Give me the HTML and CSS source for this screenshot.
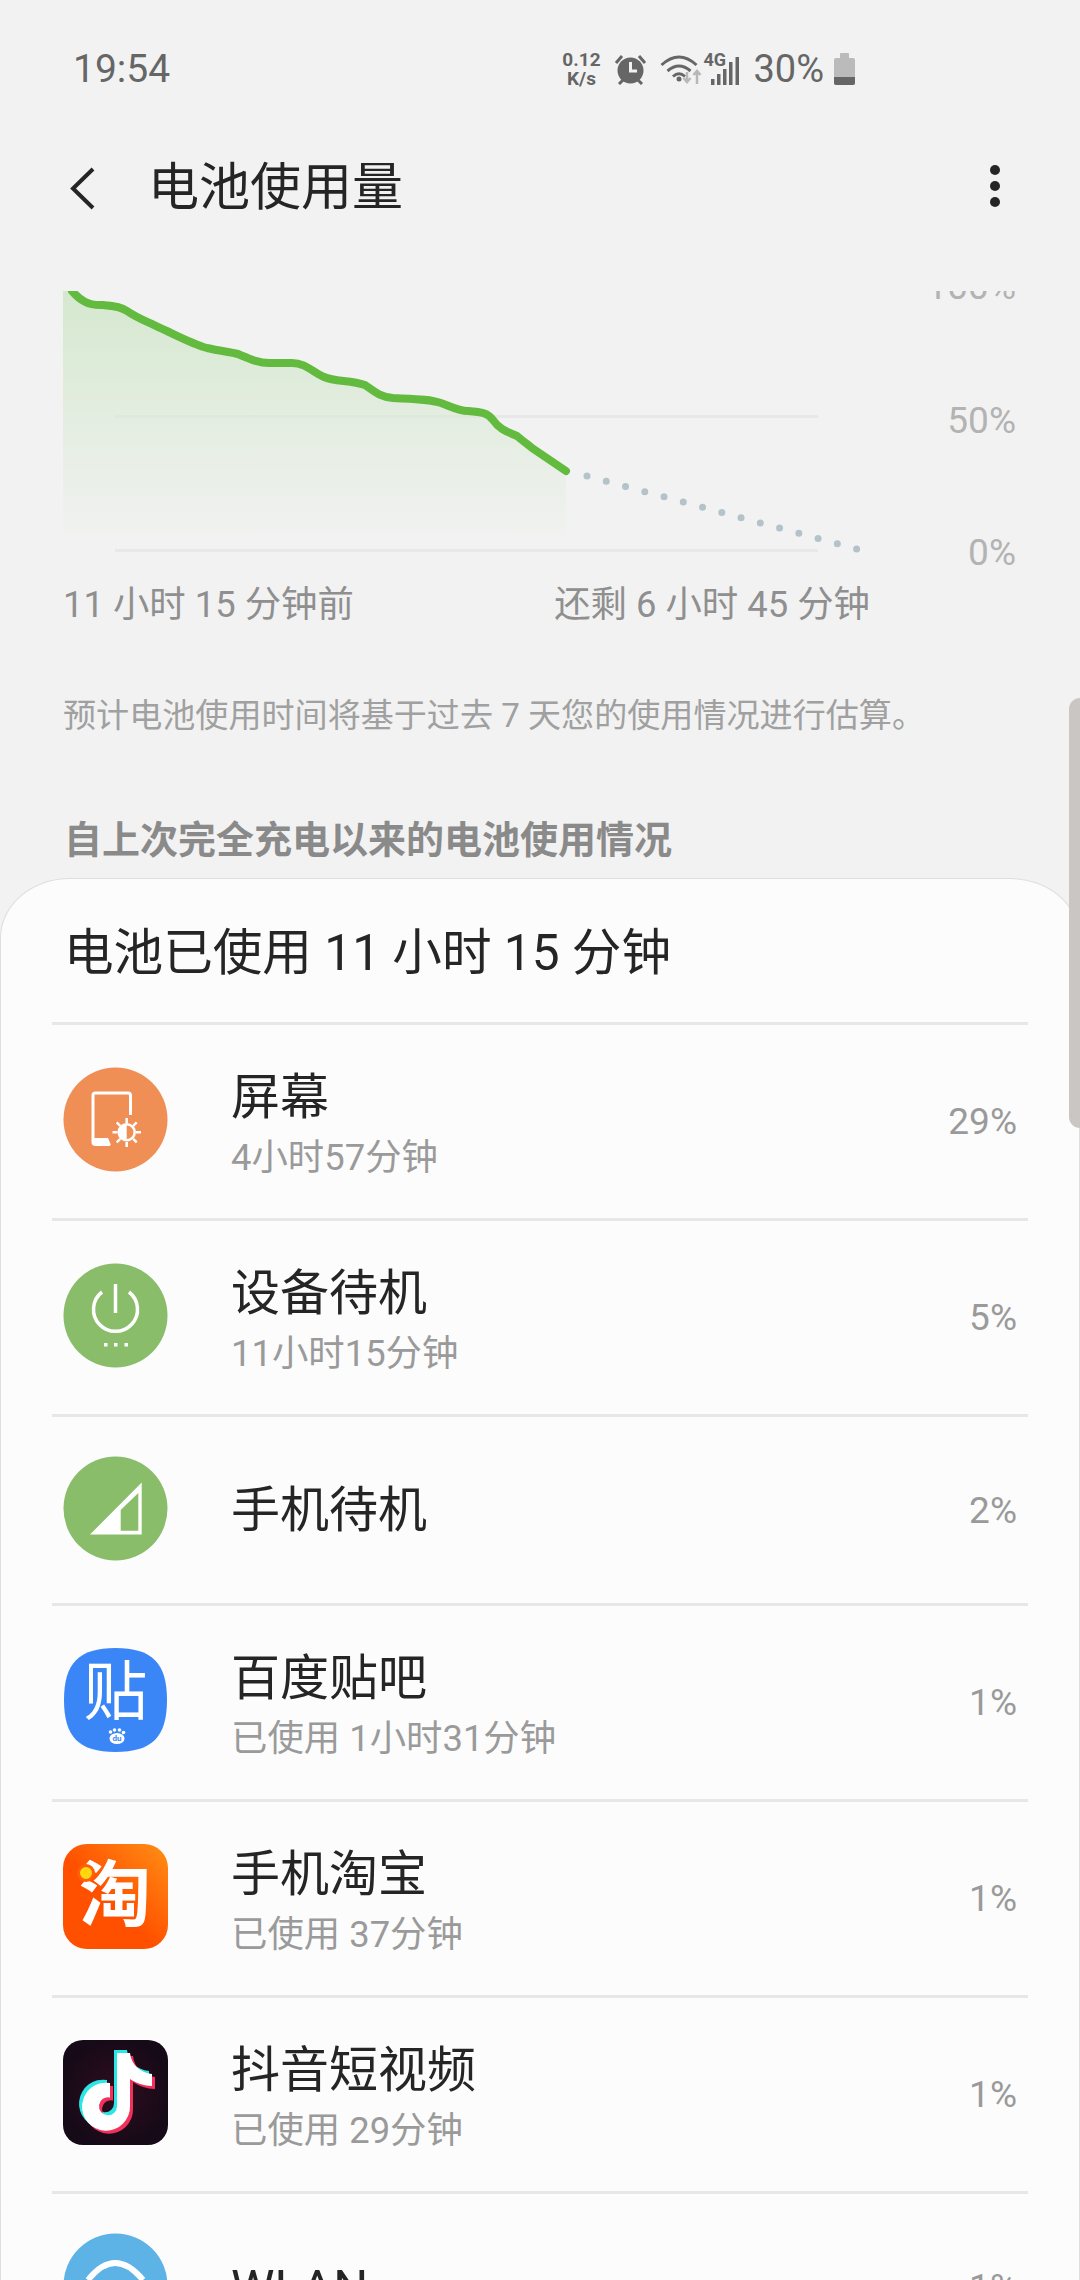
FILE: index.html
```html
<!DOCTYPE html>
<html lang="zh-CN">
  <head>
    <meta charset="UTF-8" />
    <meta name="viewport" content="width=device-width, initial-scale=1.0" />
    <title>电池使用量</title>
    <link rel="stylesheet" href="styles.css">
  </head>
  <body>
    <div class="screen">
      <div class="status">
        <span class="time">19:54</span>
        <div class="status-right">
          <div class="netspeed"><div>0.12</div><div>K/s</div></div>
          <!-- alarm -->
          <svg class="ico-alarm" width="33" height="31" viewBox="0 0 33 31">
            <circle cx="16.500" cy="16.500" r="13" fill="#666" />
            <path d="M16.500 8v9h6.500" fill="none" stroke="#f2f2f2" stroke-width="3" />
            <path d="M2 9 8 2M31 9 25 2" stroke="#666" stroke-width="3" />
            <path d="M5 30l4-4M28 30l-4-4" stroke="#666" stroke-width="3" />
          </svg>
          <!-- wifi + arrows -->
          <svg class="ico-wifi" width="42" height="31" viewBox="0 0 42 31">
            <path d="M1.500 11Q19 -5 36.500 11" fill="none" stroke="#666" stroke-width="3" />
            <path d="M7.500 17Q19 7 30.500 17" fill="none" stroke="#666" stroke-width="3" />
            <path d="M13 22.500Q19 17 25 22.500" fill="none" stroke="#666" stroke-width="3" />
            <circle cx="19" cy="25" r="2.500" fill="#666" />
            <path d="M27 18v9M23.500 24l3.500 4 3.500-4" fill="none" stroke="#b8b8b8" stroke-width="2.500" />
            <path d="M37 30v-12M33.500 21l3.500-4 3.500 4" fill="none" stroke="#b8b8b8" stroke-width="2.500" />
          </svg>
          <!-- 4G + bars -->
          <div class="signal">
            <span class="signal-4g">4G</span>
            <svg width="28" height="29" viewBox="0 0 28 29">
              <path d="M0 23h3.500v6H0zM6 18h3.500v11H6zM12 13h3.500v16H12zM18 6h3.500v23H18zM24.500 1H28v28h-3.500z" fill="#666" />
            </svg>
          </div>
          <span class="battery-pct">30%</span>
          <div class="battery">
            <div class="battery-cap"></div>
            <div class="battery-body"><div class="battery-level"></div></div>
          </div>
        </div>
      </div>

      <div class="appbar">
        <svg class="back" width="29" height="45" viewBox="0 0 29 45">
          <path d="M25 3 5 22.500 25 42" fill="none" stroke="#252525" stroke-width="4" />
        </svg>
        <h1 class="appbar-title">电池使用量</h1>
        <div class="more"><i></i><i></i><i></i></div>
      </div>

      <svg class="chart" width="1080" height="284" viewBox="0 291 1080 284">
        <defs>
          <linearGradient id="areaFill" x1="0" y1="0" x2="0" y2="1">
            <stop offset="0" stop-color="#d5e8cf" />
            <stop offset="1" stop-color="#d5e8cf" stop-opacity="0" />
          </linearGradient>
        </defs>
        <rect x="115" y="415" width="703" height="3" fill="#e8e8e8" />
        <rect x="115" y="549" width="703" height="3" fill="#e8e8e8" />
        <path d="M63 291H72C80 300 88 306 103 305C112 306 120 306 127 311C137 318 148 322 158 327C172 333 192 344 207 348C220 351 230 352 238 354C250 359 258 363 269 363L292 363C306 363 312 372 324 377C335 382 350 380 365 385C375 392 380 397 393 398C415 399 430 399 441 403C450 406 458 411 468 411C482 412 488 413 493 420C500 430 508 432 517 436C523 441 527 444 532 448L566 471V546H63Z" fill="url(#areaFill)" />
        <path d="M72 291C80 300 88 306 103 305C112 306 120 306 127 311C137 318 148 322 158 327C172 333 192 344 207 348C220 351 230 352 238 354C250 359 258 363 269 363L292 363C306 363 312 372 324 377C335 382 350 380 365 385C375 392 380 397 393 398C415 399 430 399 441 403C450 406 458 411 468 411C482 412 488 413 493 420C500 430 508 432 517 436C523 441 527 444 532 448L566 471" fill="none" stroke="#62bb3e" stroke-width="8" stroke-linecap="round" stroke-linejoin="round" />
        <line x1="587" y1="476" x2="858" y2="549.300" stroke="#b4c3ca" stroke-width="7" stroke-linecap="round" stroke-dasharray="0 19.950" />
        <text class="chart-axis" x="1016" y="299" text-anchor="end">100%</text>
        <text class="chart-axis" x="1016" y="433" text-anchor="end">50%</text>
        <text class="chart-axis" x="1016" y="565" text-anchor="end">0%</text>
      </svg>

      <div class="chart-labels">
        <span>11 小时 15 分钟前</span>
        <span>还剩 6 小时 45 分钟</span>
      </div>

      <p class="note">预计电池使用时间将基于过去 7 天您的使用情况进行估算。</p>
      <p class="section-title">自上次完全充电以来的电池使用情况</p>

      <div class="card">
        <h2 class="card-title">电池已使用 11 小时 15 分钟</h2>

        <div class="row">
          <svg class="icon" viewBox="0 0 105 105">
            <circle cx="52.500" cy="52.500" r="52" fill="#ef8f55" />
            <path d="M67.500 48V28.500a2.500 2.500 0 0 0-2.500-2.500H32.500a2.500 2.500 0 0 0-2.500 2.500V75a2.500 2.500 0 0 0 2.500 2.500H47" fill="none" stroke="#fff" stroke-width="3" />
            <path d="M31 71H45L48 78H31Z" fill="#fff" />
            <circle cx="63.700" cy="65.300" r="8" fill="none" stroke="#fff" stroke-width="2.500" />
            <path d="M63.700 57a8 8 0 0 0 0 16.600Z" fill="#fff" />
            <path d="M63.700 51v5M63.700 75v5M49.500 65.300h5M73 65.300h5M53.700 55.300l3.500 3.500M70.200 71.800l3.500 3.500M53.700 75.300l3.500-3.500M70.200 58.800l3.500-3.500" stroke="#fff" stroke-width="2.500" />
          </svg>
          <div class="row-text">
            <div class="row-name">屏幕</div>
            <div class="row-sub">4小时57分钟</div>
          </div>
          <span class="row-pct">29%</span>
        </div>

        <div class="row">
          <svg class="icon" viewBox="0 0 105 105">
            <circle cx="52.500" cy="52.500" r="52" fill="#89bd6a" />
            <path d="M52.500 21V50" stroke="#fff" stroke-width="3.500" />
            <path d="M39 29A22 22 0 1 0 66 29" fill="none" stroke="#fff" stroke-width="3.500" />
            <path d="M41 80h3.500v3.500H41zM51 80h3.500v3.500H51zM61.500 80H65v3.500h-3.500z" fill="#fff" />
          </svg>
          <div class="row-text">
            <div class="row-name">设备待机</div>
            <div class="row-sub">11小时15分钟</div>
          </div>
          <span class="row-pct">5%</span>
        </div>

        <div class="row row-single">
          <svg class="icon" viewBox="0 0 105 105">
            <circle cx="52.500" cy="52.500" r="52" fill="#89bd6a" />
            <path d="M27 78.500 78.700 26.500V78.500ZM57.700 54V74.700H75.300V37Z" fill="#fff" fill-rule="evenodd" />
          </svg>
          <div class="row-text">
            <div class="row-name">手机待机</div>
          </div>
          <span class="row-pct">2%</span>
        </div>

        <div class="row">
          <svg class="icon" viewBox="0 0 105 105">
            <path d="M52.500 0C89 0 104 15 104 52S89 104 52.500 104 1 89 1 52 16 0 52.500 0Z" fill="#3a86f7" />
            <text class="logo-tie" x="52.500" y="66" text-anchor="middle">贴</text>
            <g fill="#fff">
              <circle cx="47.500" cy="84" r="1.800" />
              <circle cx="51.500" cy="82" r="1.800" />
              <circle cx="56.500" cy="82" r="1.800" />
              <circle cx="60.500" cy="84.500" r="1.800" />
              <ellipse cx="54" cy="90.500" rx="7.500" ry="5.500" />
            </g>
            <text class="logo-du" x="54" y="93" text-anchor="middle">du</text>
          </svg>
          <div class="row-text">
            <div class="row-name">百度贴吧</div>
            <div class="row-sub">已使用 1小时31分钟</div>
          </div>
          <span class="row-pct">1%</span>
        </div>

        <div class="row">
          <svg class="icon" viewBox="0 0 105 105">
            <defs>
              <linearGradient id="taoFill" x1="0" y1="1" x2="1" y2="0">
                <stop offset="0.450" stop-color="#ff5000" />
                <stop offset="1" stop-color="#ff8f14" />
              </linearGradient>
            </defs>
            <rect width="105" height="105" rx="24" fill="url(#taoFill)" />
            <text class="logo-tao" x="52" y="76" text-anchor="middle">淘</text>
            <circle cx="23" cy="29" r="7.500" fill="#ffd60f" stroke="#ff5f06" stroke-width="3" />
          </svg>
          <div class="row-text">
            <div class="row-name">手机淘宝</div>
            <div class="row-sub">已使用 37分钟</div>
          </div>
          <span class="row-pct">1%</span>
        </div>

        <div class="row">
          <svg class="icon" viewBox="0 0 105 105">
            <defs>
              <radialGradient id="dyFill">
                <stop offset="0" stop-color="#2f0d1e" />
                <stop offset="1" stop-color="#170a18" />
              </radialGradient>
              <path id="dyNote" d="M54 13H67C68 24 77 33 89 34V46C81 46 73 43 67 39V66A24 24 0 1 1 47 43V57.500A9 9 0 1 0 54 66Z" />
            </defs>
            <rect width="105" height="105" rx="20" fill="url(#dyFill)" />
            <use href="#dyNote" x="-3" y="-3" fill="#2ae6e6" />
            <use href="#dyNote" x="3" y="3" fill="#f2305c" />
            <use href="#dyNote" fill="#fff" />
          </svg>
          <div class="row-text">
            <div class="row-name">抖音短视频</div>
            <div class="row-sub">已使用 29分钟</div>
          </div>
          <span class="row-pct">1%</span>
        </div>

        <div class="row row-single">
          <svg class="icon" viewBox="0 0 105 105">
            <circle cx="52.500" cy="52.500" r="52" fill="#5db2e6" />
            <path d="M25 47Q52 13 80 47" fill="none" stroke="#fff" stroke-width="6" />
            <path d="M36 64Q52 42 69 64" fill="none" stroke="#fff" stroke-width="6" />
          </svg>
          <div class="row-text">
            <div class="row-name">WLAN</div>
          </div>
          <span class="row-pct">1%</span>
        </div>
      </div>

      <div class="scrollbar"></div>
    </div>
  </body>
</html>
```

FILE: styles.css
```css
* {
  box-sizing: border-box;
}

body {
  margin: 0;
  padding: 0;
  font-family: Roboto, "Noto Sans CJK SC", sans-serif;
  background-color: #f2f2f2;
}

h1,
h2,
p {
  margin: 0;
  font-weight: normal;
}

.screen {
  position: relative;
  width: 1080px;
  height: 2280px;
  overflow: hidden;
  background-color: #f2f2f2;
}

/* status bar */
.status {
  display: flex;
  align-items: center;
  justify-content: space-between;
  height: 138px;
  padding: 0 225px 0 73px;
  color: #666;
}

.time {
  font-size: 39px;
}

.status-right {
  display: flex;
  align-items: center;
}

.netspeed {
  width: 42px;
  font-size: 19px;
  font-weight: bold;
  line-height: 19px;
  text-align: center;
}

.ico-alarm {
  margin-left: 12px;
}

.ico-wifi {
  margin-left: 13px;
}

.signal {
  position: relative;
  width: 36px;
  height: 31px;
  margin-left: 1px;
}

.signal svg {
  position: absolute;
  right: 0;
  bottom: 0;
}

.signal-4g {
  position: absolute;
  left: 0;
  top: -3px;
  font-size: 18px;
  font-weight: bold;
  line-height: 18px;
  background-color: #f2f2f2;
}

.battery-pct {
  margin-left: 14px;
  font-size: 38px;
}

.battery {
  display: flex;
  flex-direction: column;
  align-items: center;
  width: 21px;
  margin-left: 10px;
}

.battery-cap {
  width: 9px;
  height: 5px;
  background-color: #bbb;
  border-radius: 1px 1px 0 0;
}

.battery-body {
  display: flex;
  align-items: flex-end;
  width: 21px;
  height: 27px;
  background-color: #bbb;
  border-radius: 2px;
  overflow: hidden;
}

.battery-level {
  width: 100%;
  height: 8px;
  background-color: #666;
}

/* app bar */
.appbar {
  display: flex;
  align-items: center;
  height: 100px;
  padding: 0 80px 0 68px;
}

.appbar-title {
  flex: 1;
  margin-left: 51px;
  font-size: 51px;
  line-height: 60px;
  color: #252525;
}

.more {
  display: flex;
  flex-direction: column;
  gap: 6px;
  margin-top: -5px;
}

.more i {
  display: block;
  width: 10px;
  height: 10px;
  border-radius: 50%;
  background-color: #252525;
}

/* chart */
.chart {
  display: block;
  margin-top: 53px;
}

.chart-axis {
  font-size: 37px;
  fill: #b3b3b3;
}

.chart-labels {
  display: flex;
  justify-content: space-between;
  height: 60px;
  padding: 0 210px 0 63px;
  font-size: 36.400px;
  line-height: 60px;
  color: #8f8f8f;
}

.note {
  margin-top: 61px;
  padding-left: 63px;
  font-size: 33.100px;
  line-height: 40px;
  color: #a0a0a0;
}

.section-title {
  margin: 81px 0 15px;
  padding-left: 64px;
  font-size: 38px;
  font-weight: bold;
  line-height: 46px;
  color: #8a8a8a;
}

/* usage card */
.card {
  height: 1500px;
  padding: 0 51px;
  background-color: #fcfcfc;
  border: 1px solid #dedede;
  border-bottom: 0;
  border-radius: 70px 70px 0 0 / 60px 60px 0 0;
}

.card-title {
  padding: 44px 0 39px 12px;
  font-size: 49.600px;
  line-height: 60px;
  color: #252525;
}

.row {
  display: flex;
  align-items: center;
  height: 196px;
  padding: 0 11px;
  border-top: 3px solid #e7e7e7;
}

.row-single {
  height: 189px;
}

.icon {
  flex-shrink: 0;
  width: 105px;
  height: 105px;
  margin-top: -4px;
}

.row-text {
  flex: 1;
  margin-left: 63px;
}

.row-name {
  padding-top: 7px;
  font-size: 49px;
  line-height: 66px;
  color: #252525;
}

.row-single .row-name {
  padding-top: 2px;
}

.row-sub {
  margin-top: -2px;
  font-size: 36.400px;
  line-height: 57px;
  color: #9a9a9a;
}

.row-pct {
  font-size: 37px;
  color: #9a9a9a;
}

.logo-tie {
  font-size: 64px;
  fill: #fff;
}

.logo-du {
  font-size: 8px;
  font-weight: bold;
  fill: #3a86f7;
}

.logo-tao {
  font-size: 72px;
  font-weight: bold;
  fill: #fff;
}

.scrollbar {
  position: absolute;
  top: 698px;
  right: 0;
  width: 11px;
  height: 430px;
  background-color: #c9c6c3;
  border-radius: 12px 0 0 12px;
}
```
